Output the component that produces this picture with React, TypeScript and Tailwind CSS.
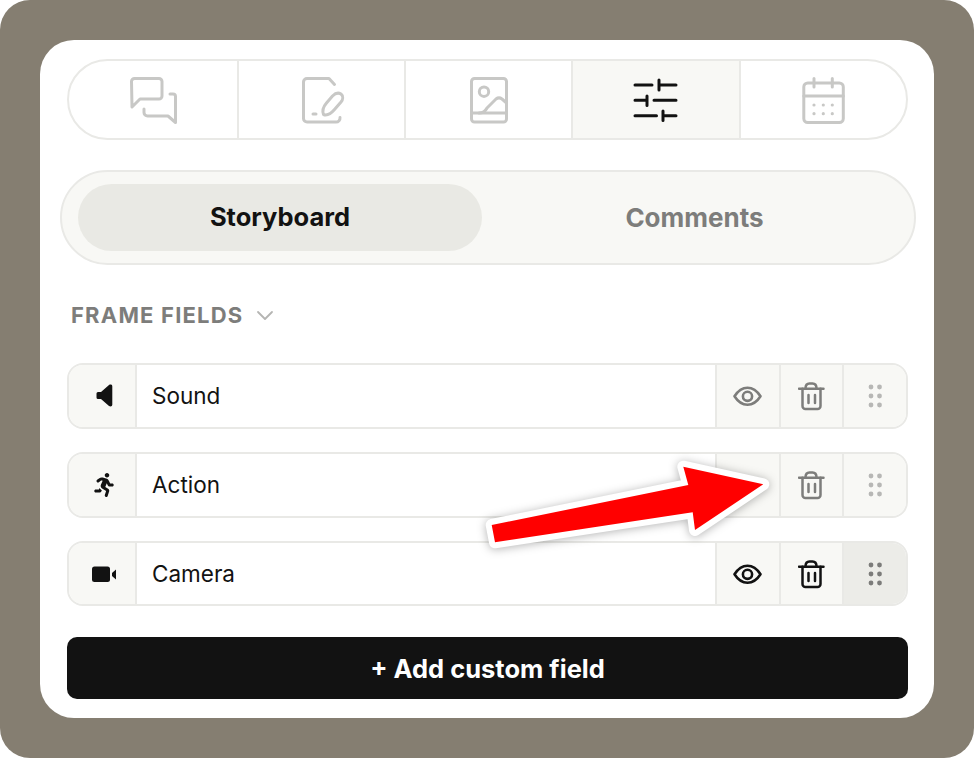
import React from "react";
import { FaRunning } from "react-icons/fa";

const gray = "#c8c8c6";
const ink = "#121212";

function Chat() {
  return (
    <svg width="48" height="48" viewBox="0 0 48 48" fill="none" stroke={gray} strokeWidth="3" strokeLinecap="round" strokeLinejoin="round">
      <path d="M1.500 5.500a3 3 0 0 1 3-3h24.500a3 3 0 0 1 3 3v14.500a3 3 0 0 1-3 3H10L2 31z" />
      <path d="M40 18h3a2.500 2.500 0 0 1 2.500 2.500V46.500L38 40H17.500a3.500 3.500 0 0 1-3.500-3.500V33" />
    </svg>
  );
}
function NoteEdit() {
  return (
    <svg width="48" height="48" viewBox="0 0 48 48" fill="none" stroke={gray} strokeWidth="3" strokeLinecap="round" strokeLinejoin="round">
      <path d="M36.500 8.500L31 2.500H9a3.500 3.500 0 0 0-3.500 3.500v36.500a3.500 3.500 0 0 0 3.500 3.500h29a4 4 0 0 0 4-4.500" />
      <path d="M15 38h3" />
      <path d="M25.500 38.500c-1.500-4 0-8 3-11.500l6-7c2.500-2.500 6-3.500 8.500-2 2.500 2 2 5.500 0 8l-6.500 7.500c-3 3.500-7 6.500-11 5z" />
    </svg>
  );
}
function ImageDoc() {
  return (
    <svg width="48" height="48" viewBox="0 0 48 48" fill="none" stroke={gray} strokeWidth="3" strokeLinecap="round" strokeLinejoin="round">
      <rect x="6.500" y="2.500" width="35" height="43.500" rx="3" />
      <circle cx="19" cy="15.700" r="4.700" />
      <path d="M6.500 37H41.500" />
      <path d="M14 37c4 0 6-1 8-5l9-9c2-1.500 4-1.500 6 0l4 3.500" />
    </svg>
  );
}
function Sliders() {
  return (
    <svg width="48" height="48" viewBox="0 0 48 48" fill="none" stroke={ink} strokeWidth="3" strokeLinecap="round">
      <path d="M3 9h17M27 9h17M27 4v10M3 24.300h12M22 24.300h22M15 20v9.500M3 39.700h21.500M31 39.700h13M31 35v9.500" />
    </svg>
  );
}
function Calendar() {
  return (
    <svg width="48" height="48" viewBox="0 0 48 48" fill="none" stroke={gray} strokeWidth="3" strokeLinecap="round" strokeLinejoin="round">
      <rect x="3.800" y="7" width="39.500" height="39.500" rx="4" />
      <path d="M3.800 20h39.500M14 2.500v8.500M32.300 2.500v8.500" />
      <g fill={gray} stroke="none">
        <circle cx="14" cy="29" r="1.600" /><circle cx="23.300" cy="29" r="1.600" /><circle cx="32.300" cy="29" r="1.600" />
        <circle cx="14" cy="37.700" r="1.600" /><circle cx="23.300" cy="37.700" r="1.600" /><circle cx="32.300" cy="37.700" r="1.600" />
      </g>
    </svg>
  );
}
function Speaker() {
  return (
    <svg width="24" height="24" viewBox="0 0 24 24" fill={ink}>
      <path d="M8 8h3L19 1c1.500-1 3.300-.5 3.300 1.500v18c0 2-1.800 2.500-3.300 1.500L11 15H8a1.500 1.500 0 0 1-1.500-1.500v-4A1.500 1.500 0 0 1 8 8z" />
    </svg>
  );
}
function Video() {
  return (
    <svg width="28" height="18" viewBox="0 0 28 18" fill={ink}>
      <rect x="4" y="1.500" width="18" height="15.500" rx="2.500" />
      <path d="M28 4.500v10l-4-3.500V8z" />
    </svg>
  );
}
function Eye({ color }: { color: string }) {
  return (
    <svg width="30" height="24" viewBox="0 0 30 24" fill="none" stroke={color} strokeWidth="2.600" strokeLinecap="round" strokeLinejoin="round">
      <path d="M1.500 12.300c3.500-5.500 8-8.500 13-8.500s9.500 3 13 8.500c-3.500 5.500-8 8.500-13 8.500S5 17.800 1.500 12.300z" />
      <circle cx="14.500" cy="12.300" r="4.600" />
    </svg>
  );
}
function Trash({ color }: { color: string }) {
  return (
    <svg width="28" height="30" viewBox="0 0 28 30" fill="none" stroke={color} strokeWidth="2.500" strokeLinecap="round" strokeLinejoin="round">
      <path d="M1 7.700h24.500" />
      <path d="M7.500 7.500c0-3 1-5 4-5h3c3 0 4 2 4 5" />
      <path d="M4.500 7.700V25a3 3 0 0 0 3 3h12a3 3 0 0 0 3-3V7.700" />
      <path d="M10.500 14v8M17 14v8" />
    </svg>
  );
}
function Dots({ color }: { color: string }) {
  return (
    <svg width="14" height="24" viewBox="0 0 14 24" fill={color}>
      <circle cx="3" cy="3" r="2.400" /><circle cx="11.500" cy="3" r="2.400" />
      <circle cx="3" cy="12" r="2.400" /><circle cx="11.500" cy="12" r="2.400" />
      <circle cx="3" cy="21" r="2.400" /><circle cx="11.500" cy="21" r="2.400" />
    </svg>
  );
}

function Row({ icon, label, tone, dark, h, hideEye }: { icon: React.ReactNode; label: string; tone: string; dark?: boolean; h: string; hideEye?: boolean }) {
  return (
    <div className={`flex ${h} items-stretch rounded-[16px] border-2 border-[#e9e9e6] overflow-hidden bg-white`}>
      <div className="w-[68px] shrink-0 flex items-center justify-center bg-[#f8f8f5] border-r-2 border-[#e9e9e6]">{icon}</div>
      <div className="flex-1 flex items-center pl-[15px] text-[22.5px] text-[#121212]">{label}</div>
      <div className="w-[64px] flex items-center justify-center bg-[#f8f8f5] border-l-2 border-[#e9e9e6]">{hideEye ? null : <Eye color={tone} />}</div>
      <div className="w-[63px] flex items-center justify-center bg-[#f8f8f5] border-l-2 border-[#e9e9e6]"><Trash color={tone} /></div>
      <div className={`w-[64px] flex items-center justify-center border-l-2 border-[#e9e9e6] ${dark ? "bg-[#ecece8]" : "bg-[#f8f8f5]"}`}>
        <Dots color={dark ? "#7c7c7a" : "#b7b7b5"} />
      </div>
    </div>
  );
}

export default function App() {
  return (
    <div className="w-[974px] h-[758px] bg-white overflow-hidden relative" style={{ fontFamily: "Inter, 'Liberation Sans', sans-serif" }}>
      <div className="w-full h-full bg-[#857e71] rounded-[30px] p-[40px]">
        <div className="w-[894px] h-[678px] bg-white rounded-[34px] pt-[19px] pl-[27px] pr-[26px] flex flex-col">
          <div className="h-[81px] shrink-0 flex rounded-full border-2 border-[#e9e9e6] overflow-hidden">
            <div className="w-[168px] flex items-center justify-center pl-[2px]"><Chat /></div>
            <div className="w-[167px] flex items-center justify-center border-l-2 border-[#e9e9e6]"><NoteEdit /></div>
            <div className="w-[167px] flex items-center justify-center border-l-2 border-[#e9e9e6]"><ImageDoc /></div>
            <div className="w-[168px] flex items-center justify-center border-l-2 border-[#e9e9e6] bg-[#f8f8f5]"><Sliders /></div>
            <div className="flex-1 flex items-center justify-center border-l-2 border-[#e9e9e6]"><Calendar /></div>
          </div>

          <div className="mt-[30px] -ml-[7px] -mr-[8px] h-[95px] shrink-0 flex items-center rounded-full border-2 border-[#e9e9e6] bg-[#f8f8f5] pl-[16px] pr-[15px]">
            <div className="w-[404px] h-[67px] rounded-full bg-[#e9e9e4] flex items-center justify-center text-[25.5px] font-bold text-[#121212]">Storyboard</div>
            <div className="flex-1 h-[67px] flex items-center justify-center pl-[8px] text-[26px] font-bold text-[#7d7d7b]">Comments</div>
          </div>

          <div className="mt-[34px] h-[32px] shrink-0 flex items-center gap-[13px] pl-[4px] text-[22px] font-bold tracking-[1.2px] text-[#7d7d7b]">
            FRAME FIELDS
            <svg width="18" height="11" viewBox="0 0 18 11" fill="none" stroke="#b5b5b3" strokeWidth="1.800" strokeLinecap="round" strokeLinejoin="round"><path d="M2 2l7 7 7-7" /></svg>
          </div>

          <div className="mt-[32px] flex flex-col gap-[23px]">
            <Row h="h-[66px]" icon={<Speaker />} label="Sound" tone="#7d7d7b" />
            <Row h="h-[66px]" icon={<FaRunning size={24} color={ink} className="ml-[4px]" />} label="Action" tone="#7d7d7b" hideEye />
            <Row h="h-[65px]" icon={<Video />} label="Camera" tone="#121212" dark />
          </div>

          <button className="mt-[31px] h-[62px] shrink-0 rounded-[10px] bg-[#121212] text-white text-[25.5px] font-bold pt-[2px]">+ Add custom field</button>
        </div>
      </div>

      <svg className="absolute left-[470px] top-[445px]" width="310" height="120" viewBox="470 445 310 120" style={{ filter: "drop-shadow(0 1px 5px rgba(0,0,0,0.3))" }}>
        <path d="M491.700 525 L688.300 485 L683.300 466.700 L763.300 484.300 L695 530 L692.700 512.300 L495 542.300 Z" fill="#ff0000" stroke="#ffffff" strokeWidth="12" strokeLinejoin="round" paintOrder="stroke" />
      </svg>
    </div>
  );
}
